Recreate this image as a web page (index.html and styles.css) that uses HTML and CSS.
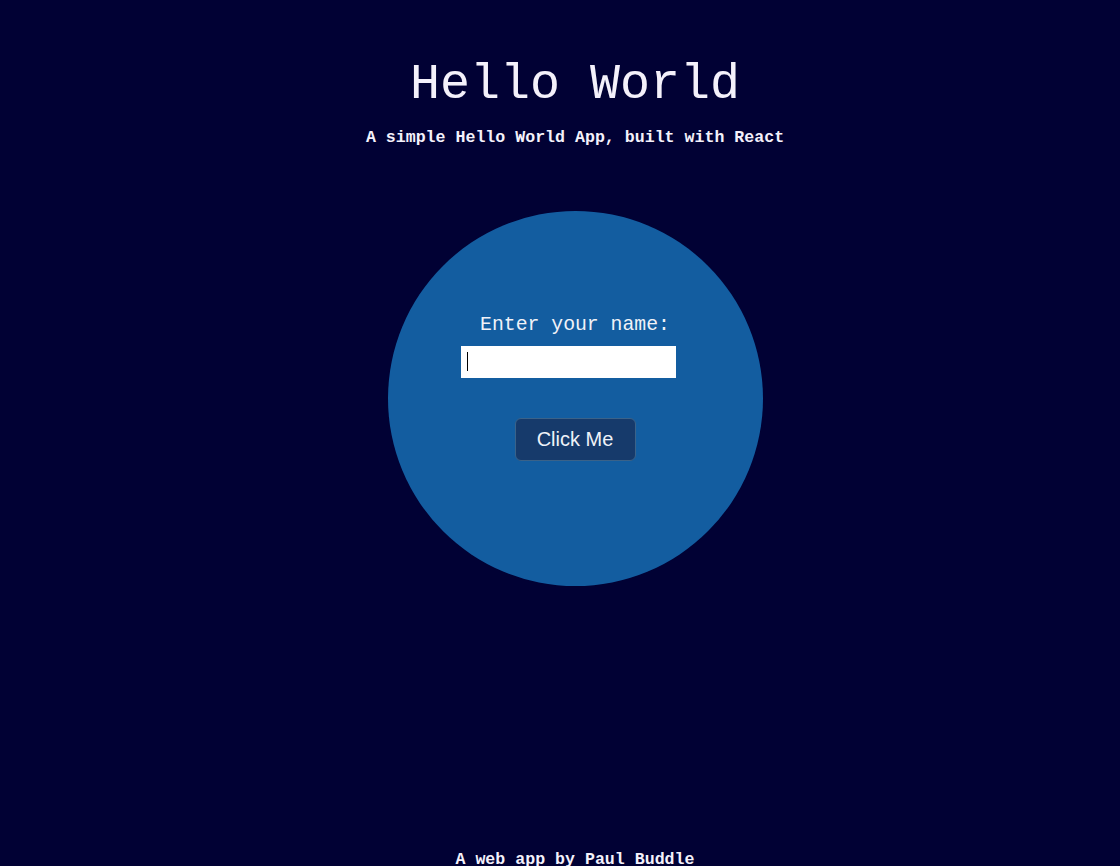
FILE: index.html
```html
<!DOCTYPE html>
<html>
<head>
<meta charset="utf-8">
<link rel="stylesheet" href="styles.css">
</head>
<body>
<div class="app">
  <header class="header">
    <h1 class="title">Hello World</h1>
    <p class="subtitle">A simple Hello World App, built with React</p>
  </header>
  <main class="main">
    <div class="circle">
      <label class="label" for="name">Enter your name:</label>
      <span class="field"><input class="input" id="name" type="text"></span>
      <button class="btn">Click Me</button>
    </div>
  </main>
  <footer class="footer">A web app by Paul Buddle</footer>
</div>
</body>
</html>
```
FILE: styles.css
```css
html, body {
  margin: 0;
  padding: 0;
  background: #010134;
  height: 100%;
}
.app {
  height: 866px;
  padding-left: 30px;
  display: flex;
  flex-direction: column;
  align-items: center;
  font-family: "Liberation Mono", "DejaVu Sans Mono", monospace;
  color: #f4f1fb;
  box-sizing: border-box;
}
.header {
  display: flex;
  flex-direction: column;
  align-items: center;
  padding-top: 56px;
}
.title {
  margin: 0;
  font-size: 50px;
  font-weight: normal;
  line-height: 58px;
}
.subtitle {
  margin: 14px 0 0 0;
  font-size: 16.6px;
  font-weight: bold;
  line-height: 20px;
}
.main {
  margin-top: 63px;
  flex: 1;
}
.circle {
  width: 375px;
  height: 375px;
  border-radius: 50%;
  background: #135da0;
  display: flex;
  flex-direction: column;
  align-items: center;
  padding-top: 102px;
  box-sizing: border-box;
}
.label {
  font-size: 19.8px;
  line-height: 24px;
  color: #f0f2f8;
}
.field {
  position: relative;
  display: block;
  margin-top: 9px;
  margin-right: 14px;
  height: 32px;
}
.field::after {
  content: "";
  position: absolute;
  left: 6px;
  top: 6px;
  width: 1px;
  height: 19px;
  background: #000000;
}
.input {
  display: block;
  width: 215px;
  height: 32px;
  box-sizing: border-box;
  border: none;
  outline: none;
  background: #ffffff;
  padding: 0 6px;
  font-size: 16px;
}
.btn {
  margin-top: 40px;
  width: 121px;
  height: 43px;
  box-sizing: border-box;
  background: #163a6b;
  border: 1px solid #3a6289;
  border-radius: 6px;
  color: #eef2f8;
  font-family: "Liberation Sans", Arial, sans-serif;
  font-size: 20px;
}
.footer {
  font-size: 16.6px;
  font-weight: bold;
  line-height: 20px;
  margin-bottom: -4px;
}
```
